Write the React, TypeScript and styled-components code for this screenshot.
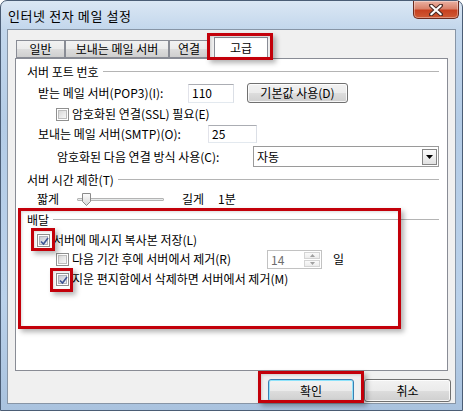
import styled, { createGlobalStyle } from "styled-components";

const GlobalStyle = createGlobalStyle`
  html, body { margin: 0; padding: 0; background: #fff; }
  body {
    font-family: "Noto Sans CJK KR", "Liberation Sans", sans-serif;
    font-size: 12px;
    color: #000;
  }
  * { box-sizing: border-box; }
`;

const Window = styled.div`
  width: 463px;
  height: 411px;
  border: 1px solid #4b5d75;
  border-radius: 7px 7px 0 0;
  background: linear-gradient(180deg, #dbe7f4 0px, #c3d7ec 28px, #b4cce6 120px, #bad1ea 300px, #a9c2de 411px);
  display: flex;
  flex-direction: column;
  padding: 0 6px 6px 6px;
`;

const TitleBar = styled.div`
  height: 28px;
  display: flex;
  align-items: flex-start;
  margin: 0 -6px;
  padding-left: 7px;
`;

const Title = styled.span`
  margin-top: 7px;
  line-height: 16px;
  font-size: 13px;
  letter-spacing: 0.6px;
  color: #000;
`;

const CloseButton = styled.div`
  margin-left: auto;
  margin-right: 3px;
  width: 46px;
  height: 18px;
  border: 1px solid #6b2a1e;
  border-top: none;
  border-radius: 0 0 5px 5px;
  background: linear-gradient(180deg, #eab1a2 0%, #d9826b 45%, #c7401f 55%, #cf5a34 100%);
  display: flex;
  align-items: center;
  justify-content: center;
  box-shadow: inset 0 0 0 1px rgba(255, 255, 255, 0.35);
`;

const Client = styled.div`
  position: relative;
  flex: 1;
  border: 1px solid #8795a6;
  background: #f0f0f0;
  display: flex;
  flex-direction: column;
`;

const TabRow = styled.div`
  display: flex;
  align-items: flex-end;
  height: 22px;
  margin-top: 6px;
  padding-left: 8px;
  position: relative;
  z-index: 1;
`;

const Tab = styled.div<{ $w: number; $active?: boolean }>`
  width: ${(p) => p.$w}px;
  height: ${(p) => (p.$active ? 22 : 18)}px;
  margin-left: ${(p) => (p.$active ? 5 : 0)}px;
  margin-bottom: ${(p) => (p.$active ? -1 : 0)}px;
  border: 1px solid #898c95;
  border-bottom: ${(p) => (p.$active ? "none" : "1px solid #898c95")};
  background: ${(p) =>
    p.$active ? "#fff" : "linear-gradient(180deg, #f2f2f2 0%, #ebebeb 50%, #dddddd 51%, #cfcfcf 100%)"};
  display: flex;
  align-items: center;
  justify-content: center;
  line-height: 16px;
  padding-bottom: ${(p) => (p.$active ? 2 : 0)}px;
`;

const Panel = styled.div`
  position: relative;
  width: 433px;
  height: 313px;
  margin-left: 7px;
  border: 1px solid #898c95;
  background: #fff;
  padding: 4px 8px 0 11px;
`;

const GroupHeader = styled.div<{ $mt: number }>`
  display: flex;
  align-items: center;
  height: 16px;
  margin-top: ${(p) => p.$mt}px;
  white-space: nowrap;
  &::after {
    content: "";
    flex: 1;
    height: 1px;
    margin-left: 4px;
    background: #b4b4b4;
  }
`;

const Row = styled.div<{ $indent: number; $h: number; $mt: number }>`
  display: flex;
  align-items: center;
  height: ${(p) => p.$h}px;
  margin-top: ${(p) => p.$mt}px;
  padding-left: ${(p) => p.$indent}px;
  white-space: nowrap;
`;

const Label = styled.span<{ $w?: number }>`
  flex-shrink: 0;
  width: ${(p) => (p.$w ? `${p.$w}px` : "auto")};
  line-height: 16px;
`;

const TextBox = styled.div<{ $w: number; $h: number }>`
  width: ${(p) => p.$w}px;
  height: ${(p) => p.$h}px;
  border: 1px solid;
  border-color: #abadb3 #dbdfe6 #e3e9ef #e2e3ea;
  background: #fff;
  padding-left: 3px;
  display: flex;
  align-items: center;
  line-height: 16px;
`;

const PushButton = styled.div<{ $w: number; $h: number; $default?: boolean }>`
  width: ${(p) => p.$w}px;
  height: ${(p) => p.$h}px;
  border: 1px solid ${(p) => (p.$default ? "#3c7fb1" : "#707070")};
  border-radius: 3px;
  background: linear-gradient(180deg, #f2f2f2 0%, #ebebeb 50%, #dddddd 51%, #cfcfcf 100%);
  box-shadow: inset 0 0 0 1px ${(p) => (p.$default ? "#8ee3fb" : "rgba(255,255,255,0.8)")};
  display: flex;
  align-items: center;
  justify-content: center;
  line-height: 16px;
  flex-shrink: 0;
`;

const Check = styled.span<{ $on?: boolean }>`
  width: 13px;
  height: 13px;
  flex-shrink: 0;
  margin-right: 3px;
  border: 1px solid #8f8f8f;
  background: #fff;
  padding: 1px;
  display: flex;
`;

const CheckInner = styled.span<{ $on?: boolean }>`
  flex: 1;
  border: 1px solid ${(p) => (p.$on ? "#b0b4bc" : "#bdbdbd")};
  background: ${(p) =>
    p.$on ? "linear-gradient(135deg, #c9ccd4, #eceef2)" : "linear-gradient(135deg, #d9d9d9, #f7f7f7)"};
  position: relative;
  display: flex;
  align-items: center;
  justify-content: center;
`;

const Select = styled.div`
  width: 186px;
  height: 21px;
  border: 1px solid #9a9a9a;
  background: #fff;
  display: flex;
  align-items: center;
  padding-left: 3px;
  line-height: 16px;
`;

const DropButton = styled.div`
  margin-left: auto;
  margin-right: 1px;
  width: 15px;
  height: 16px;
  border: 1px solid #858585;
  background: linear-gradient(180deg, #fbfbfb, #e2e2e2);
  display: flex;
  align-items: center;
  justify-content: center;
`;

const SliderTrack = styled.div`
  position: relative;
  width: 87px;
  height: 3px;
  margin-right: 18px;
  border: 1px solid #b3b3b3;
  border-radius: 1px;
  background: #e7eaea;
  flex-shrink: 0;
`;

const SliderThumb = styled.svg`
  position: absolute;
  left: 4px;
  top: -6px;
`;

const Spinner = styled.div`
  width: 55px;
  height: 19px;
  margin-right: 11px;
  border: 1px solid #c2c2c2;
  background: #fff;
  display: flex;
  align-items: stretch;
  color: #6d6d6d;
  flex-shrink: 0;
`;

const SpinText = styled.span`
  flex: 1;
  padding-left: 3px;
  line-height: 17px;
`;

const SpinButtons = styled.div`
  width: 16px;
  margin: 1px;
  display: flex;
  flex-direction: column;
  gap: 1px;
`;

const SpinHalf = styled.div`
  flex: 1;
  border: 1px solid #d4d4d4;
  background: linear-gradient(180deg, #fafafa, #ececec);
  display: flex;
  align-items: center;
  justify-content: center;
`;

const ButtonRow = styled.div`
  display: flex;
  justify-content: flex-end;
  gap: 10px;
  margin-top: 8px;
  padding-right: 4px;
`;

const Highlight = styled.div<{ $x: number; $y: number; $w: number; $h: number }>`
  position: absolute;
  left: ${(p) => p.$x}px;
  top: ${(p) => p.$y}px;
  width: ${(p) => p.$w}px;
  height: ${(p) => p.$h}px;
  border: 3px solid #c3000a;
  box-shadow: 3px 3px 5px rgba(0, 0, 0, 0.3), inset 1px 1px 3px rgba(0, 0, 0, 0.15);
  pointer-events: none;
  z-index: 5;
`;

const tabs = [
  { label: "일반", w: 49 },
  { label: "보내는 메일 서버", w: 104 },
  { label: "연결", w: 40 },
  { label: "고급", w: 54, active: true },
];

function CheckBox({ on }: { on?: boolean }) {
  return (
    <Check>
      <CheckInner $on={on}>
        {on && (
          <svg width="9" height="9" viewBox="0 0 9 9" style={{ position: "absolute", left: 0, top: 0 }}>
            <path d="M1 4.5 L3.5 7 L8 1" fill="none" stroke="#3d5494" strokeWidth="1.6" />
          </svg>
        )}
      </CheckInner>
    </Check>
  );
}

export default function App() {
  return (
    <>
      <GlobalStyle />
      <Window>
        <TitleBar>
          <Title>인터넷 전자 메일 설정</Title>
          <CloseButton>
            <svg width="14" height="12" viewBox="0 0 14 12">
              <path d="M2 1.5 L12 10.5 M12 1.5 L2 10.5" stroke="#4a2a24" strokeWidth="4.2" strokeLinecap="round" />
              <path d="M2.3 1.8 L11.7 10.2 M11.7 1.8 L2.3 10.2" stroke="#fff" strokeWidth="2.2" strokeLinecap="round" />
            </svg>
          </CloseButton>
        </TitleBar>
        <Client>
          <TabRow>
            {tabs.map((t) => (
              <Tab key={t.label} $w={t.w} $active={t.active}>
                {t.label}
              </Tab>
            ))}
          </TabRow>
          <Panel>
            <GroupHeader $mt={0}>서버 포트 번호</GroupHeader>
            <Row $indent={11} $h={20} $mt={4}>
              <Label $w={150}>받는 메일 서버(POP3)(I):</Label>
              <TextBox $w={46} $h={19}>110</TextBox>
              <span style={{ width: 13 }} />
              <PushButton $w={101} $h={20}>기본값 사용(D)</PushButton>
            </Row>
            <Row $indent={29} $h={16} $mt={3}>
              <CheckBox />
              <Label>암호화된 연결(SSL) 필요(E)</Label>
            </Row>
            <Row $indent={11} $h={20} $mt={2}>
              <Label $w={170}>보내는 메일 서버(SMTP)(O):</Label>
              <TextBox $w={49} $h={18}>25</TextBox>
            </Row>
            <Row $indent={30} $h={21} $mt={2}>
              <Label $w={196}>암호화된 다음 연결 방식 사용(C):</Label>
              <Select>
                자동
                <DropButton>
                  <svg width="7" height="4" viewBox="0 0 7 4">
                    <path d="M0 0 H7 L3.5 4 Z" fill="#000" />
                  </svg>
                </DropButton>
              </Select>
            </Row>

            <GroupHeader $mt={4}>서버 시간 제한(T)</GroupHeader>
            <Row $indent={10} $h={16} $mt={4}>
              <Label $w={40}>짧게</Label>
              <SliderTrack>
                <SliderThumb width="9" height="13" viewBox="0 0 9 13">
                  <defs>
                    <linearGradient id="th" x1="0" y1="0" x2="0" y2="1">
                      <stop offset="0" stopColor="#fdfdfd" />
                      <stop offset="1" stopColor="#d6d6d6" />
                    </linearGradient>
                  </defs>
                  <path d="M0.5 0.5 H8.5 V8.5 L4.5 12.5 L0.5 8.5 Z" fill="url(#th)" stroke="#8b8b8b" />
                </SliderThumb>
              </SliderTrack>
              <Label $w={36}>길게</Label>
              <Label>1분</Label>
            </Row>

            <GroupHeader $mt={4}>배달</GroupHeader>
            <Row $indent={10} $h={16} $mt={5}>
              <CheckBox on />
              <Label>서버에 메시지 복사본 저장(L)</Label>
            </Row>
            <Row $indent={29} $h={20} $mt={1}>
              <CheckBox />
              <Label $w={195}>다음 기간 후에 서버에서 제거(R)</Label>
              <Spinner>
                <SpinText>14</SpinText>
                <SpinButtons>
                  <SpinHalf>
                    <svg width="5" height="3" viewBox="0 0 5 3">
                      <path d="M0 3 H5 L2.5 0 Z" fill="#a0a0a0" />
                    </svg>
                  </SpinHalf>
                  <SpinHalf>
                    <svg width="5" height="3" viewBox="0 0 5 3">
                      <path d="M0 0 H5 L2.5 3 Z" fill="#a0a0a0" />
                    </svg>
                  </SpinHalf>
                </SpinButtons>
              </Spinner>
              <Label>일</Label>
            </Row>
            <Row $indent={29} $h={16} $mt={2}>
              <CheckBox on />
              <Label>지운 편지함에서 삭제하면 서버에서 제거(M)</Label>
            </Row>

            <Highlight $x={2} $y={149} $w={383} $h={121} />
            <Highlight $x={15} $y={169} $w={24} $h={23} />
            <Highlight $x={34} $y={209} $w={23} $h={24} />
          </Panel>
          <ButtonRow>
            <PushButton $w={86} $h={23} $default>확인</PushButton>
            <PushButton $w={87} $h={23}>취소</PushButton>
          </ButtonRow>
          <Highlight $x={199} $y={3} $w={66} $h={27} />
          <Highlight $x={250} $y={341} $w={106} $h={32} />
        </Client>
      </Window>
    </>
  );
}
